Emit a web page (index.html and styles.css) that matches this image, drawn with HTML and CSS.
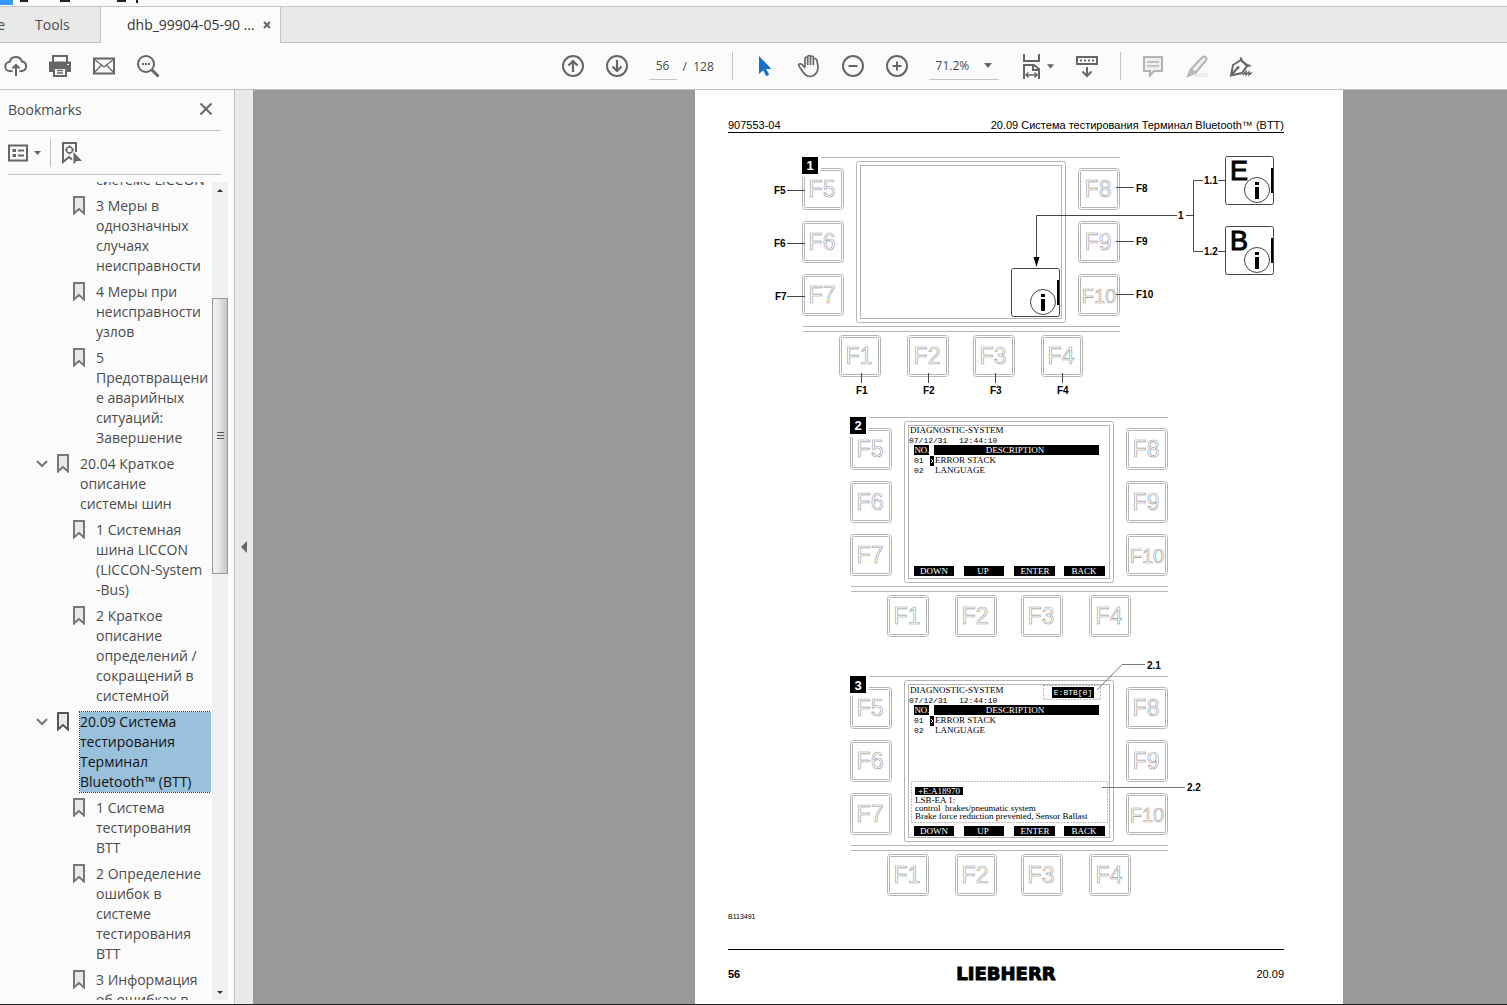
FILE: index.html
```html
<!DOCTYPE html>
<html lang="ru">
<head>
<meta charset="utf-8">
<title>dhb_99904-05-90</title>
<link rel="stylesheet" href="styles.css">
</head>
<body>
<div class="app">
  <div class="titlebar">
    <svg width="150" height="6" viewBox="0 0 150 6" aria-hidden="true">
      <rect width="13" height="5" fill="#3399ff"/>
      <path d="M20 0h8v2h-8zM60 0h10v2h-10zM117 0h9v2h-9zM136 0h2v3h-2z" fill="#222"/>
    </svg>
  </div>
  <nav class="tabs">
    <button class="tab tab-home">Home</button>
    <button class="tab tab-tools">Tools</button>
    <div class="tab tab-file">
      <span>dhb_99904-05-90 ...</span>
      <button class="tab-close" aria-label="Close tab"><svg width="8" height="8" viewBox="0 0 8 8"><path d="M1 1l6 6M7 1L1 7" stroke="#666" stroke-width="2"/></svg></button>
    </div>
  </nav>
  <div class="toolbar">
    <div class="group group-left">
      <button class="tool" aria-label="Upload"><svg class="icon" viewBox="0 0 24 24"><path d="M8.500 17H6a4.500 4.500 0 0 1-.5-9A6.500 6.500 0 0 1 18 7.500 4.800 4.800 0 0 1 18 17h-2.500M12 22V11M8.500 14.500L12 11l3.500 3.500"/></svg></button>
      <button class="tool" aria-label="Print"><svg class="icon" viewBox="0 0 24 24"><path d="M5 8V2h14v6"/><path d="M1 7.500h22V18h-4v-4H5v4H1z" fill="#666" stroke="none"/><path d="M6 14h12v8H6z" fill="#fbfbfb"/><path d="M9 16.500h6M9 19h6" stroke-width="1.500"/><path d="M19 10.500h2" stroke="#fff" stroke-width="1"/></svg></button>
      <button class="tool" aria-label="Mail"><svg class="icon" viewBox="0 0 24 24"><path d="M2 4.500h20v15H2z"/><path d="M2 5l10 8 10-8M2 19l7.500-8M22 19l-7.500-8" stroke-width="1.200"/></svg></button>
      <button class="tool" aria-label="Find"><svg class="icon" viewBox="0 0 24 24"><circle cx="10" cy="10" r="8"/><path d="M15.500 15.500l7 7" stroke-width="3"/><path d="M6 10h2M9 10h2M12 10h2"/></svg></button>
    </div>
    <div class="group group-main">
      <button class="tool" aria-label="Previous page"><svg class="icon" viewBox="0 0 24 24"><circle cx="12" cy="12" r="10"/><path d="M12 18V7M7.500 11.500L12 7l4.500 4.500" stroke-width="2.200"/></svg></button>
      <button class="tool" aria-label="Next page"><svg class="icon" viewBox="0 0 24 24"><circle cx="12" cy="12" r="10"/><path d="M12 6v11M7.500 12.500L12 17l4.500-4.500" stroke-width="2.200"/></svg></button>
      <input class="page-input" type="text" value="56" aria-label="Page">
      <span class="page-total">/&nbsp; 128</span>
      <span class="sep"></span>
      <button class="tool" aria-label="Select"><svg class="icon" viewBox="0 0 24 24"><path d="M6 2v18l4.200-3.800 3 6 3-1.500-3-5.700H18.500z" fill="#1b6fcc" stroke="none"/></svg></button>
      <button class="tool" aria-label="Hand"><svg class="icon" viewBox="0 0 24 24"><path d="M8 13V4.500c0-2 2.700-2 2.700 0V11M10.700 10V3c0-2 2.800-2 2.800 0v8M13.500 10V3.500c0-2 2.900-2 2.900 0V11M16.400 11V6c0-2 2.800-2 3.300 0 .8 3.500 1.500 5.500 1.300 8-.3 5-4 8.500-8 8.500-5 0-6.700-4-9-7.500-1-1.500-2.800-3-2.200-4.300.7-1.400 2.900-.9 3.900.3L8 14" stroke-width="1.700"/></svg></button>
      <button class="tool" aria-label="Zoom out"><svg class="icon" viewBox="0 0 24 24"><circle cx="12" cy="12" r="10"/><path d="M7.500 12h9"/></svg></button>
      <button class="tool" aria-label="Zoom in"><svg class="icon" viewBox="0 0 24 24"><circle cx="12" cy="12" r="10"/><path d="M7.500 12h9M12 7.500v9"/></svg></button>
      <div class="zoom">
        <select class="zoom-select" aria-label="Zoom level"><option>71.2%</option></select>
        <svg width="8" height="5" viewBox="0 0 8 5"><path d="M0 0h8L4 5z" fill="#666"/></svg>
      </div>
      <button class="tool tool-fit" aria-label="Fit width"><svg class="icon icon-tall" viewBox="0 0 24 26"><path d="M4 1v7h15V1M4 26V12h10l5 4v10M13 12v5h6"/><path d="M6 22h11M8.500 19.500L6 22l2.500 2.500M14.500 19.500L17 22l-2.500 2.500" stroke-width="1.500"/></svg><svg width="7" height="5" viewBox="0 0 8 5"><path d="M0 0h8L4 5z" fill="#666"/></svg></button>
      <button class="tool tool-read" aria-label="Read mode"><svg class="icon" viewBox="0 0 24 24"><path d="M2 3h20v7H2z"/><path d="M5 6.500h2M9 6.500h2M13 6.500h2M17 6.500h2M12 13v9M7.500 17.500L12 22l4.500-4.500"/></svg></button>
      <span class="sep sep-near"></span>
      <button class="tool" aria-label="Comment"><svg class="icon icon-pale" viewBox="0 0 24 24"><path d="M3 3h18v14h-8l-4 4.500V17H3z" fill="#eee"/><path d="M6 8h12M6 12h12" stroke-width="1.500"/></svg></button>
      <button class="tool" aria-label="Highlight"><svg class="icon icon-pale" viewBox="0 0 24 24"><path d="M10 19h13v4H9z" fill="#eee" stroke="none"/><path d="M6 15L17.500 3c2-1.500 5 .8 3.500 3.500L10.500 19zM6 15l4.500 4M5 17l3 3-5 2z" fill="#eee"/></svg></button>
      <button class="tool" aria-label="Sign"><svg class="icon" viewBox="0 0 24 24"><path d="M2 21.500L4 11l8-5 6 6-5 7zM2 21.500L8.500 14M11.500 3.500L13 7l5 4 3.500 1" /><circle cx="9" cy="13.500" r="1.500" fill="#666" stroke="none"/><path d="M14 21l3-3.500v3.500l3-3v3l3-2.500" stroke-width="1.500"/></svg></button>
    </div>
  </div>
  <main class="work">
    <aside class="sidebar">
      <header class="side-head">
        <h1 class="side-title">Bookmarks</h1>
        <button class="side-close" aria-label="Close panel"><svg width="14" height="14" viewBox="0 0 14 14"><path d="M1.500 1.500l11 11M12.500 1.500l-11 11" stroke="#666" stroke-width="2"/></svg></button>
      </header>
      <div class="side-tools">
        <button class="side-btn" aria-label="Options"><svg width="20" height="18" viewBox="0 0 20 18"><path d="M1 1.500h18v15H1z" fill="none" stroke="#666" stroke-width="2"/><path d="M10 6.500h6M10 11.500h6" stroke="#666" stroke-width="2"/><path d="M4.500 5h3.500v3H4.500zM4.500 10h3.500v3H4.500z" fill="#666"/></svg><svg width="7" height="4" viewBox="0 0 7 4"><path d="M0 0h7L3.500 4z" fill="#666"/></svg></button>
        <span class="side-sep"></span>
        <button class="side-btn" aria-label="Find current bookmark"><svg width="22" height="24" viewBox="0 0 22 24"><path d="M15 11V2H2v19l6-5 3 2.500" fill="none" stroke="#666" stroke-width="2"/><circle cx="8.500" cy="9" r="3" fill="none" stroke="#666" stroke-width="1.300"/><path d="M8.500 4.500v2.500M8.500 11v2.500M4 9h2.500M10.500 9h2.500" stroke="#666" stroke-width="1.300"/><path d="M12.500 11v12.500l3-3.500H21z" fill="#666"/></svg></button>
      </div>
      <div class="side-body">
        <ul class="tree">
          <li class="row leaf"><svg class="mark mark-off" viewBox="0 0 12 19"></svg><a href="#b2">системе LICCON</a></li>
          <li class="row leaf"><svg class="mark" viewBox="0 0 12 19"><path d="M1 1h10v16.500l-5-4.500-5 4.500z"/></svg><a href="#b3">3 Меры в<br>однозначных<br>случаях<br>неисправности</a></li>
          <li class="row leaf"><svg class="mark" viewBox="0 0 12 19"><path d="M1 1h10v16.500l-5-4.500-5 4.500z"/></svg><a href="#b4">4 Меры при<br>неисправности<br>узлов</a></li>
          <li class="row leaf"><svg class="mark" viewBox="0 0 12 19"><path d="M1 1h10v16.500l-5-4.500-5 4.500z"/></svg><a href="#b5">5<br>Предотвращени<br>е аварийных<br>ситуаций:<br>Завершение</a></li>
          <li class="row"><svg class="chev" viewBox="0 0 12 8"><path d="M1 1l5 5 5-5"/></svg><svg class="mark" viewBox="0 0 12 19"><path d="M1 1h10v16.500l-5-4.500-5 4.500z"/></svg><a href="#c4">20.04 Краткое<br>описание<br>системы шин</a></li>
          <li class="row leaf"><svg class="mark" viewBox="0 0 12 19"><path d="M1 1h10v16.500l-5-4.500-5 4.500z"/></svg><a href="#c41">1 Системная<br>шина LICCON<br>(LICCON-System<br>-Bus)</a></li>
          <li class="row leaf"><svg class="mark" viewBox="0 0 12 19"><path d="M1 1h10v16.500l-5-4.500-5 4.500z"/></svg><a href="#c42">2 Краткое<br>описание<br>определений /<br>сокращений в<br>системной</a></li>
          <li class="row current"><svg class="chev" viewBox="0 0 12 8"><path d="M1 1l5 5 5-5"/></svg><svg class="mark" viewBox="0 0 12 19"><path d="M1 1h10v16.500l-5-4.500-5 4.500z"/></svg><a href="#c9">20.09 Система<br>тестирования<br>Терминал<br>Bluetooth™ (BTT)</a></li>
          <li class="row leaf"><svg class="mark" viewBox="0 0 12 19"><path d="M1 1h10v16.500l-5-4.500-5 4.500z"/></svg><a href="#c91">1 Система<br>тестирования<br>BTT</a></li>
          <li class="row leaf"><svg class="mark" viewBox="0 0 12 19"><path d="M1 1h10v16.500l-5-4.500-5 4.500z"/></svg><a href="#c92">2 Определение<br>ошибок в<br>системе<br>тестирования<br>BTT</a></li>
          <li class="row leaf"><svg class="mark" viewBox="0 0 12 19"><path d="M1 1h10v16.500l-5-4.500-5 4.500z"/></svg><a href="#c93">3 Информация<br>об ошибках в</a></li>
        </ul>
        <div class="scroll">
          <svg class="scroll-arrow" viewBox="0 0 16 16"><path d="M5 10h6L8 7z" fill="#333"/></svg>
          <span></span>
          <div class="thumb"><svg width="7" height="8" viewBox="0 0 7 8"><path d="M0 .5h7M0 3.500h7M0 6.500h7" stroke="#555"/></svg></div>
          <span></span>
          <svg class="scroll-arrow" viewBox="0 0 16 16"><path d="M5 7h6l-3 3z" fill="#333"/></svg>
        </div>
      </div>
    </aside>
    <button class="collapse" aria-label="Hide panel"><svg width="6" height="12" viewBox="0 0 6 12"><path d="M6 0v12L0 6z" fill="#666"/></svg></button>
    <section class="viewer">
      <article class="paper">
        <header class="paper-head"><span>907553-04</span><span>20.09 Система тестирования Терминал Bluetooth™ (BTT)</span></header>
        <figure class="figure">
          <svg class="drawing" viewBox="728 133 556 777">
            <defs>
              <g id="key"><rect x=".5" y=".5" width="41" height="41" rx="3"/><rect x="2.500" y="2.500" width="37" height="37" rx="1"/></g>
              <g id="device">
                <g class="wire">
                  <path d="M803 157.500h317M803 326.500h317M803 331.500h317"/>
                  <rect x="856.500" y="161.500" width="209" height="161" rx="2"/>
                  <rect x="860.500" y="165.500" width="201" height="153"/>
                  <use href="#key" x="802" y="168"/><use href="#key" x="802" y="221"/><use href="#key" x="802" y="274"/>
                  <use href="#key" x="1078" y="168"/><use href="#key" x="1078" y="221"/><use href="#key" x="1078" y="274"/>
                  <use href="#key" x="839" y="335"/><use href="#key" x="907" y="335"/><use href="#key" x="973" y="335"/><use href="#key" x="1041" y="335"/>
                </g>
                <g class="cap">
                  <text x="822" y="197">F5</text><text x="822" y="250">F6</text><text x="822" y="303">F7</text>
                  <text x="1098" y="197">F8</text><text x="1098" y="250">F9</text><text class="cap-long" x="1099" y="303">F10</text>
                  <text x="859" y="364">F1</text><text x="927" y="364">F2</text><text x="993" y="364">F3</text><text x="1061" y="364">F4</text>
                </g>
                <path d="M801 156h20v14h-1v7h-19z" fill="#fff"/>
                <rect x="802" y="157" width="16" height="17"/>
              </g>
              <g id="screen">
                <g class="lcd">
                  <text x="910" y="433">DIAGNOSTIC-SYSTEM</text>
                  <text class="mono" x="909" y="443">07/12/31</text><text class="mono" x="959" y="443">12:44:10</text>
                  <text class="mono" x="914" y="463">01</text><text x="935" y="463">ERROR STACK</text>
                  <text class="mono" x="914" y="473">02</text><text x="935" y="473">LANGUAGE</text>
                </g>
                <path d="M914 445h15v10h-15zM934 445h165v10H934zM930 456h4v10h-4zM914 566h40v10h-40zM964 566h40v10h-40zM1014 566h41v10h-41zM1064 566h41v10h-41z"/>
                <path d="M931 459l2 2-2 2" fill="none" stroke="#fff"/>
                <g class="lcd lcd-inv">
                  <text x="922" y="453">NO.</text><text x="1015" y="453">DESCRIPTION</text>
                  <text x="934" y="574">DOWN</text><text x="983" y="574">UP</text><text x="1035" y="574">ENTER</text><text x="1084" y="574">BACK</text>
                </g>
              </g>
              <g id="info">
                <rect class="ink" x="1225.500" y="156.500" width="48" height="48" rx="2"/>
                <path d="M1271 168h2v25h-2z"/>
                <circle class="ink" cx="1257" cy="190" r="12.500"/>
                <path d="M1255 182h4v3h-4zM1255 187h4v12h-4z"/>
              </g>
            </defs>
            <use href="#device"/>
            <use href="#device" x="48" y="260"/>
            <use href="#device" x="48" y="519"/>
            <g class="tag"><text x="810" y="170">1</text><text x="858" y="430">2</text><text x="858" y="690">3</text></g>

            <g class="ink">
              <path d="M787 190.500h18M787 243.500h18M787 296.500h18M1116 187.500h18M1116 241.500h18M1116 294.500h18"/>
              <path d="M861.500 373v10M928.500 373v10M995.500 373v10M1062.500 373v10"/>
              <path d="M1036.500 258v-42.500H1177M1186 215.500h7.500M1203 180.500h-9.500v71h9.500M1218 180.500h7M1218 251.500h7"/>
            </g>
            <path d="M1033.500 257h6l-3 10z"/>
            <rect x="1011" y="268" width="49" height="49" rx="2" fill="#fff"/>
            <use href="#info"/><use href="#info" y="70"/><use href="#info" x="-214" y="112"/>
            <g class="letter"><text x="1230" y="180">E</text><text x="1230" y="250">B</text></g>
            <g class="callout">
              <text x="774" y="194">F5</text><text x="774" y="247">F6</text><text x="775" y="300">F7</text>
              <text x="1136" y="192">F8</text><text x="1136" y="245">F9</text><text x="1136" y="298">F10</text>
              <text x="856" y="394">F1</text><text x="923" y="394">F2</text><text x="990" y="394">F3</text><text x="1057" y="394">F4</text>
              <text x="1178" y="219">1</text><text x="1204" y="184">1.1</text><text x="1204" y="255">1.2</text>
              <text x="1147" y="669">2.1</text><text x="1187" y="791">2.2</text>
            </g>

            <use href="#screen"/>
            <use href="#screen" y="260"/>
            <path class="ink soft" d="M1097 690l25-25.500h23M1102 787.500h83"/>
            <path class="dots" d="M1043.500 685.500h57v14h-57zM911.500 781.500h196v41h-196z"/>
            <path d="M1052 687h42v11h-42zM915 787h48v8h-48z"/>
            <g class="lcd lcd-inv"><text class="mono" x="1073" y="695">E:BTB[0]</text><text x="939" y="794">+E:A18970</text></g>
            <g class="lcd"><text x="915" y="803">LSB-EA 1:</text><text x="915" y="811">control &#160;brakes/pneumatic system</text><text x="915" y="819">Brake force reduction prevented, Sensor Ballast</text></g>
          </svg>
          <figcaption class="fig-id">B113491</figcaption>
        </figure>
        <footer class="paper-foot"><b>56</b><span class="brand">LIEBHERR</span><span>20.09</span></footer>
      </article>
    </section>
  </main>
</div>
</body>
</html>
```
FILE: styles.css
```css
* { box-sizing: border-box; }
body { margin: 0; font-family: "Open Sans", "Noto Sans", sans-serif; font-size: 14px; color: #4b4b4b; background: #fbfbfb; }
button { border: 0; padding: 0; background: none; font: inherit; color: inherit; }
svg { display: block; flex: none; }

.app { display: flex; flex-direction: column; height: 100vh; overflow: hidden; border-bottom: 1px solid #222; }
.titlebar { height: 6px; flex: none; }

.tabs { display: flex; flex: none; height: 37px; background: #e9e9e9; border-top: 1px solid #c4c4c4; }
.tab { display: flex; align-items: center; border-bottom: 1px solid #c4c4c4; line-height: 20px; }
.tab-home { width: 5px; justify-content: flex-end; white-space: nowrap; overflow: hidden; }
.tab-tools { width: 95px; padding-left: 30px; }
.tab-file { width: 181px; padding: 0 9px 0 26px; justify-content: space-between; background: #fbfbfb; border: solid #c4c4c4; border-width: 0 1px; color: #333; white-space: nowrap; }
.tabs::after { content: ""; flex: 1; border-bottom: 1px solid #c4c4c4; }

.toolbar { display: flex; flex: none; height: 47px; border-bottom: 1px solid #c4c4c4; font-size: 12px; }
.toolbar::after { content: ""; flex: 244; }
.group { display: flex; align-items: center; flex: none; }
.group-left { flex: 380 0 176px; margin-left: -6px; }
.tool { display: flex; align-items: center; justify-content: center; width: 44px; height: 40px; }
.icon { width: 24px; height: 24px; fill: none; stroke: #666; stroke-width: 2; }
.icon-tall { height: 26px; }
.icon-pale { stroke: #b4b4b4; }
.page-input { width: 28px; height: 28px; margin-left: 10px; padding: 0; border: 0; border-bottom: 1px solid #c4c4c4; background: none; font: inherit; color: inherit; text-align: center; }
.page-total { width: 36px; padding-left: 6px; white-space: nowrap; }
.sep { width: 1px; height: 28px; margin: 0 10px 0 19px; background: #c4c4c4; }
.sep-near { margin-left: 11px; }
.zoom { display: flex; align-items: center; width: 70px; height: 28px; margin-left: 10px; padding-right: 7px; border-bottom: 1px solid #c4c4c4; }
.zoom-select { flex: 1; padding: 0 0 0 7px; border: 0; background: none; font: inherit; color: inherit; appearance: none; }
.tool-fit { width: 36px; margin-left: 20px; gap: 3px; }
.tool-read { margin-left: 10px; }

.work { display: flex; flex: 1; min-height: 0; }
.sidebar { display: flex; flex-direction: column; flex: none; width: 235px; padding: 0 6px 4px 8px; border-right: 1px solid #c4c4c4; }
.side-head { display: flex; align-items: center; justify-content: space-between; flex: none; height: 41px; margin-right: 7px; padding: 0 8px 2px 0; border-bottom: 1px solid #c4c4c4; }
.side-title { margin: 0; font-size: 14px; font-weight: 400; }
.side-tools { display: flex; align-items: center; flex: none; height: 44px; margin: 0 7px 7px 0; border-bottom: 1px solid #c4c4c4; }
.side-btn { display: flex; align-items: center; gap: 6px; }
.side-sep { width: 1px; height: 28px; margin: 0 10px 0 9px; background: #c4c4c4; }
.side-body { display: flex; justify-content: space-between; flex: 1; min-height: 0; overflow: hidden; }
.tree { width: 203px; height: 100%; margin: 0; padding: 0; list-style: none; line-height: 20px; overflow: hidden; }
.row { display: flex; padding-left: 28px; margin-bottom: 6px; }
.row:first-child { margin-top: -12px; }
.leaf { padding-left: 65px; }
.row a { flex: 1; margin-left: 11px; color: inherit; text-decoration: none; white-space: nowrap; }
.mark { width: 12px; height: 19px; fill: #e8e8e8; stroke: #777; stroke-width: 2; }
.chev { width: 12px; height: 8px; margin: 6px 9px 0 0; fill: none; stroke: #777; stroke-width: 2; }
.current a { background: #9ac1dc; color: #111; outline: 1px dotted #333; }
.current .mark { stroke: #555; }
.scroll { display: grid; grid-template-rows: 16px 100fr 276px 410fr 16px; width: 16px; background: #f0f0f0; }
.scroll-arrow { width: 16px; height: 16px; }
.thumb { display: flex; align-items: center; justify-content: center; border: 1px solid #999; background: linear-gradient(90deg, #f3f3f3, #e4e4e6 45%, #c6c6cc); }

.collapse { display: flex; align-items: center; justify-content: center; flex: none; width: 18px; background: #e9e9e9; }
.viewer { display: grid; grid-template-columns: 442fr 648px 164fr; flex: 1; min-width: 0; background: #999; overflow: hidden; }
.paper { grid-column: 2; display: flex; flex-direction: column; padding: 28px 59px 0 33px; background: #fff; color: #000; font-family: "Liberation Sans", Arial, sans-serif; font-size: 11px; line-height: 14px; }
.paper-head { display: flex; justify-content: space-between; border-bottom: 1px solid #000; }
.figure { margin: 0; }
.drawing { width: 100%; height: auto; }
.fig-id { font-size: 7px; line-height: 14px; }
.paper-foot { display: grid; grid-template-columns: 1fr auto 1fr; align-items: center; margin-top: 25px; padding-top: 12px; border-top: 1px solid #000; line-height: 24px; }
.paper-foot span:last-child { text-align: right; }
.brand { font-family: "DejaVu Sans", sans-serif; font-size: 18px; font-weight: 700; line-height: 20px; -webkit-text-stroke: 1px #000; }

.wire { fill: none; stroke: #b5b5b5; }
.cap { fill: #fff; stroke: #999; stroke-width: .6; font-size: 23px; text-anchor: middle; }
.cap-long { font-size: 20px; }
.tag { fill: #fff; font-size: 13px; font-weight: 700; text-anchor: middle; }
.ink { fill: none; stroke: #444; }
.soft { stroke: #777; }
.letter { font-size: 27px; stroke: #000; }
.callout { font-size: 10px; font-weight: 700; }
.dots { fill: none; stroke: #777; stroke-dasharray: 1 2; }
.lcd { font-family: "Liberation Serif", serif; font-size: 9px; }
.lcd-inv { fill: #fff; text-anchor: middle; }
.mono { font-family: "Liberation Mono", monospace; font-size: 8px; }
```
